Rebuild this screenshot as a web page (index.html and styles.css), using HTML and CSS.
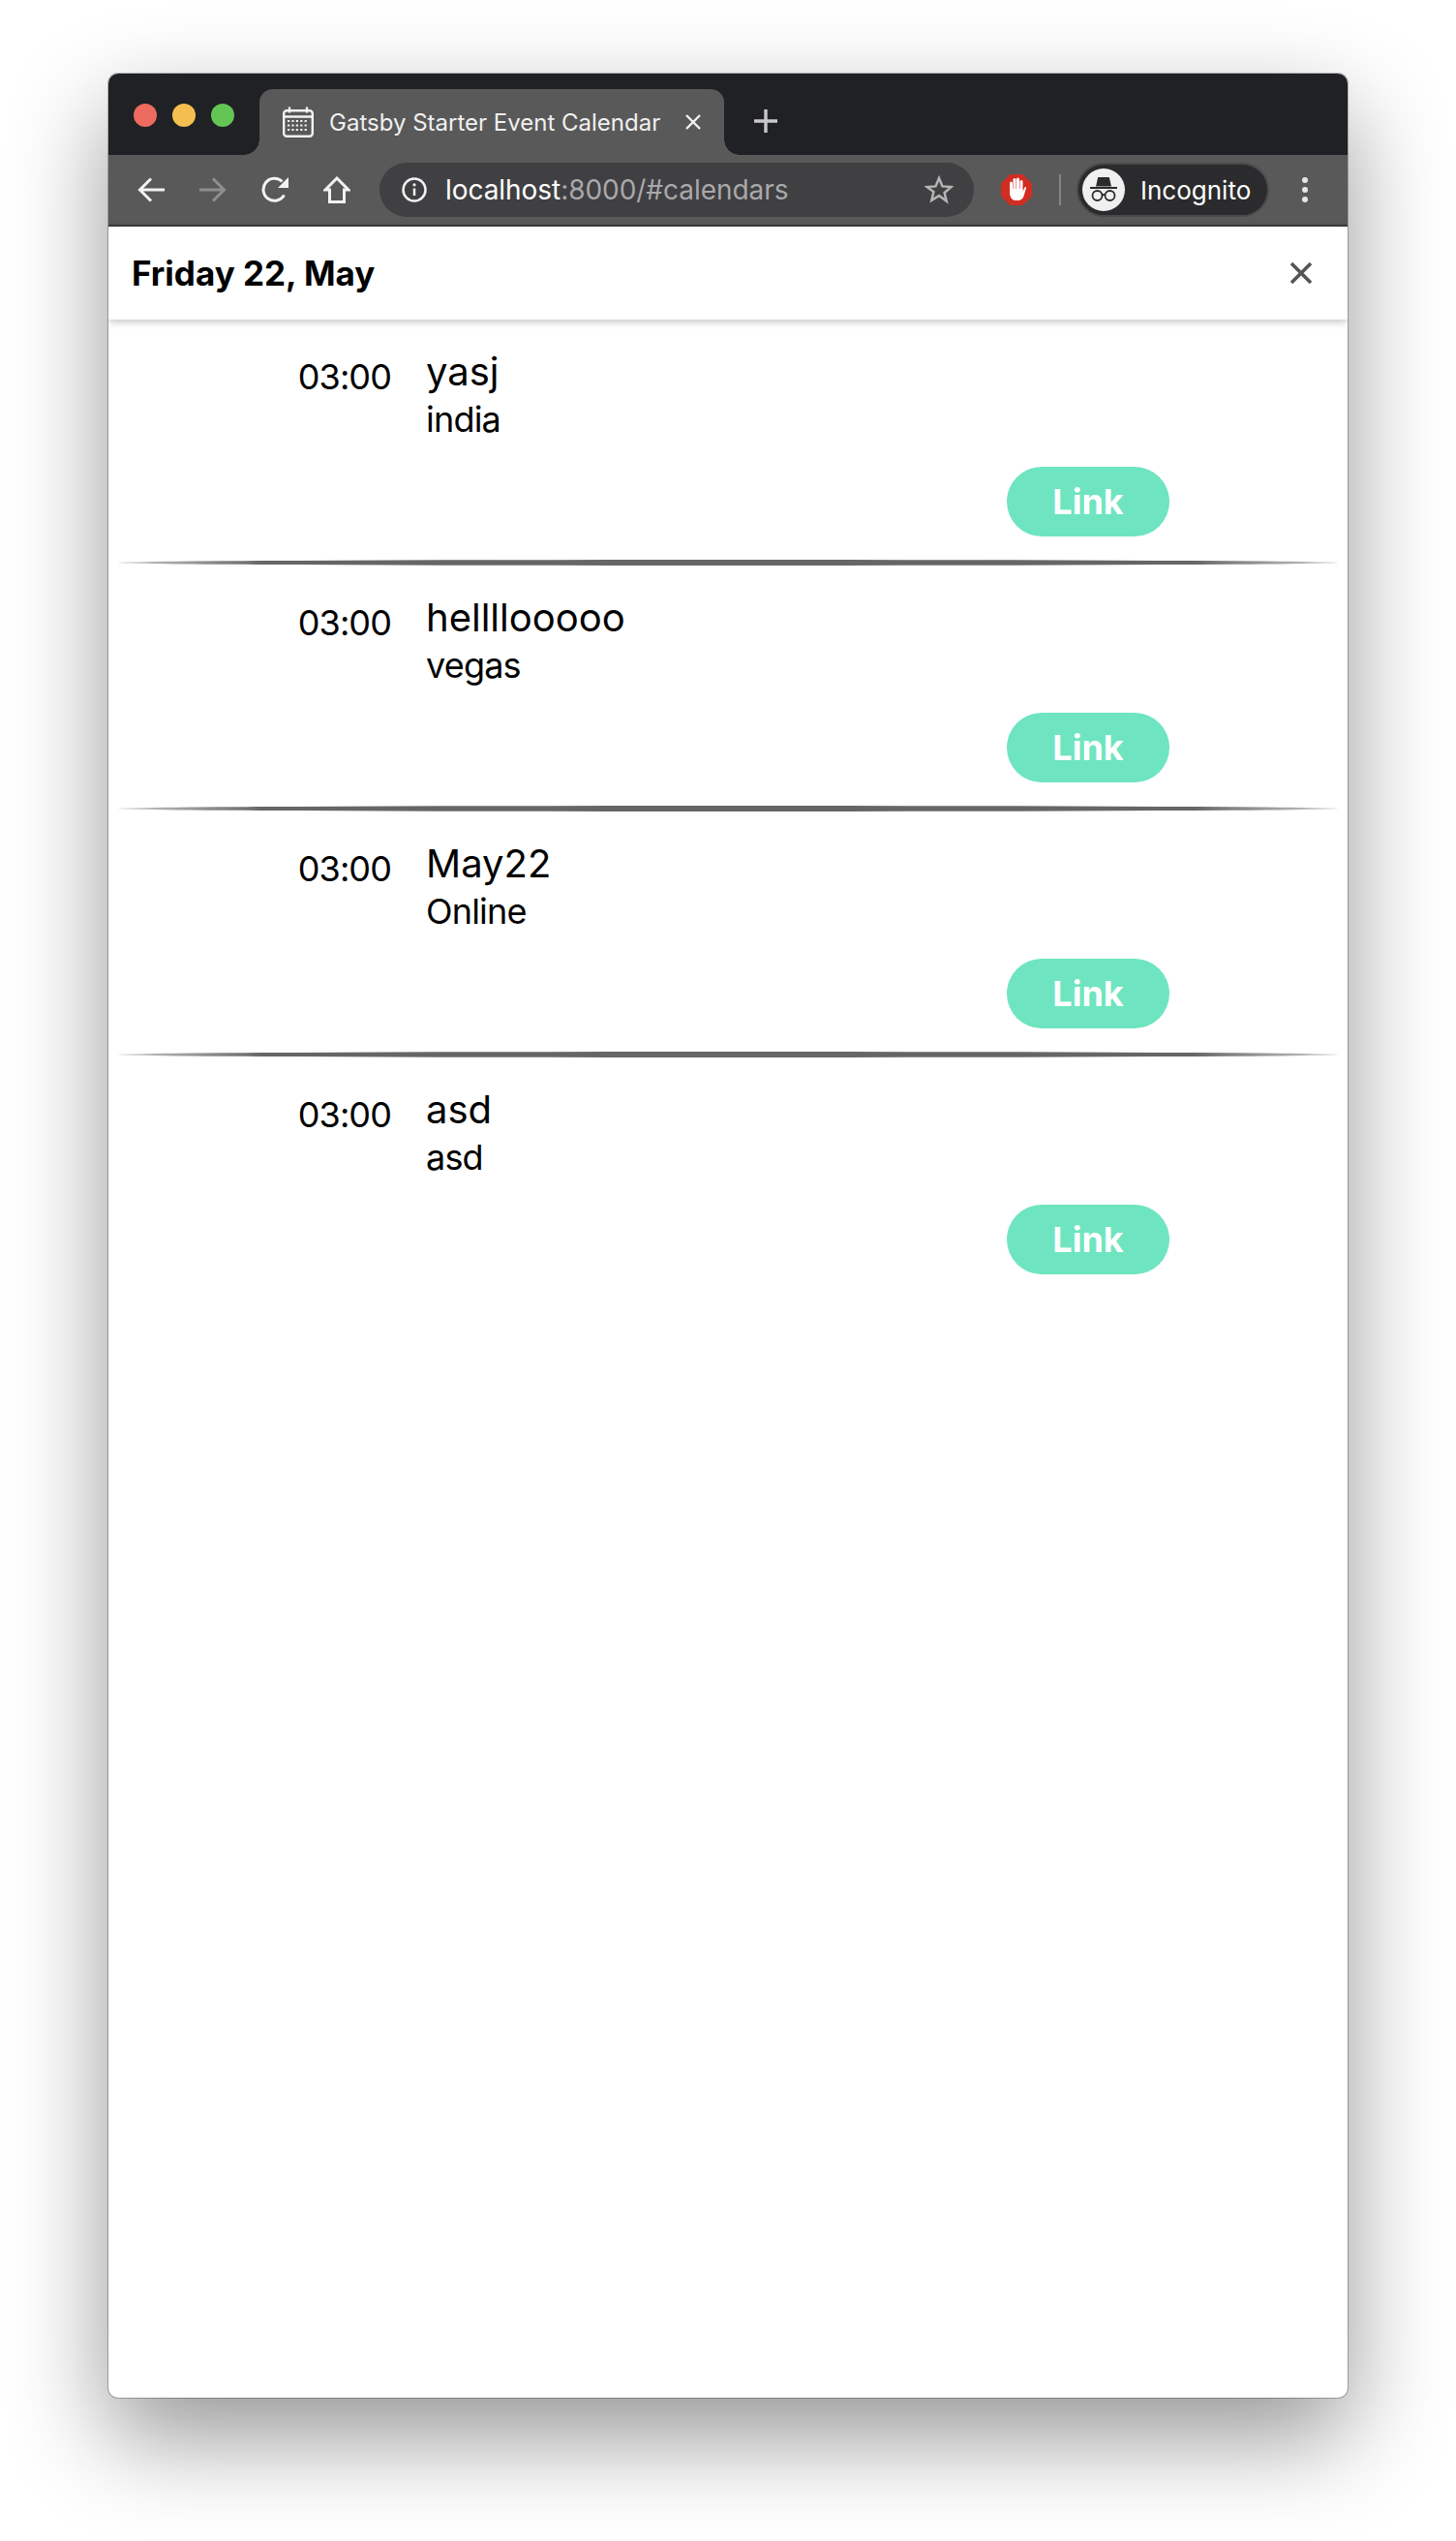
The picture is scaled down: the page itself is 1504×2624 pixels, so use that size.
FILE: index.html
```html
<!DOCTYPE html>
<html lang="en">
<head>
    <meta charset="UTF-8">
    <title>Gatsby Starter Event Calendar</title>
    <link rel="stylesheet" href="styles.css">
</head>
<body>

<div class="window">
    <div class="tabstrip">
        <div class="lights">
            <span class="light red"></span>
            <span class="light yellow"></span>
            <span class="light green"></span>
        </div>
        <div class="tab">
            <svg class="favicon" width="32" height="32" viewBox="0 0 32 32">
                <rect x="1.200" y="4.200" width="29.600" height="26.600" rx="3" fill="none" stroke="#f2f2f2" stroke-width="2.400"/>
                <path d="M1 10.500h30" stroke="#f2f2f2" stroke-width="2.400"/>
                <path d="M7 0.500v6M25 0.500v6" stroke="#f2f2f2" stroke-width="2.400"/>
                <path d="M5 15h22M5 19.500h22M5 24h22" stroke="#f2f2f2" stroke-width="2.200" stroke-dasharray="2.200 2.200"/>
            </svg>
            <span class="tab-title">Gatsby Starter Event Calendar</span>
            <svg class="tab-close" width="18" height="18" viewBox="0 0 18 18">
                <path d="M2 2l14 14M16 2L2 16" stroke="#f2f2f2" stroke-width="2.400"/>
            </svg>
        </div>
        <svg class="new-tab" width="24" height="24" viewBox="0 0 24 24">
            <path d="M12 0v24M0 12h24" stroke="#c8c8c8" stroke-width="3.400"/>
        </svg>
    </div>

    <div class="toolbar">
        <svg class="nav-icon" width="28" height="26" viewBox="0 0 28 26">
            <path d="M28 13H3M14 1.500L2.500 13 14 24.500" fill="none" stroke="#f2f2f2" stroke-width="3"/>
        </svg>
        <svg class="nav-icon" width="28" height="26" viewBox="0 0 28 26">
            <path d="M0 13h25M14 1.500L25.500 13 14 24.500" fill="none" stroke="#8f8f8f" stroke-width="3"/>
        </svg>
        <svg class="nav-icon" width="28" height="28" viewBox="0 0 28 28">
            <path d="M23.500 19.500A11.500 11.500 0 1 1 21.500 5.500" fill="none" stroke="#f2f2f2" stroke-width="3"/>
            <path d="M28 1v11H17z" fill="#f2f2f2"/>
        </svg>
        <svg class="nav-icon" width="28" height="28" viewBox="0 0 28 28">
            <path d="M14 2L2 14h4.500v12.500h15V14H26z" fill="none" stroke="#f2f2f2" stroke-width="3"/>
        </svg>
        <div class="omnibox">
            <svg width="26" height="26" viewBox="0 0 26 26">
                <circle cx="13" cy="13" r="11.500" fill="none" stroke="#f2f2f2" stroke-width="2.500"/>
                <path d="M13 11.500v7.500" stroke="#f2f2f2" stroke-width="2.500"/>
                <circle cx="13" cy="7.800" r="1.600" fill="#f2f2f2"/>
            </svg>
            <span class="url"><span class="url-host">localhost</span>:8000/#calendars</span>
            <svg class="star" width="30" height="30" viewBox="0 0 30 30">
                <path d="M15 3l3.500 8.400 9 .7-6.900 5.900 2.100 8.800L15 21.100 7.300 25.800l2.100-8.800L2.500 12.100l9-.7z" fill="none" stroke="#b5b5b5" stroke-width="2.500"/>
            </svg>
        </div>
        <svg class="adblock" width="32" height="32" viewBox="0 0 32 32">
            <path d="M9.500 0h13L32 9.500v13L22.500 32h-13L0 22.500v-13z" fill="#d22d22"/>
            <path d="M10.500 17V9M14 16V5.500M17.500 16V5M21 17V7.500" stroke="#fff" stroke-width="3" stroke-linecap="round"/>
            <path d="M9 15h13.500v3l2-4.500c.4-.9 1.700-.5 1.500.6L24 21c-.8 3.600-2.800 6-6.500 6h-2c-3 0-4.600-1.500-5.800-4L9 20z" fill="#fff"/>
        </svg>
        <span class="toolbar-divider"></span>
        <div class="profile">
            <svg width="44" height="44" viewBox="0 0 44 44">
                <circle cx="22" cy="22" r="22" fill="#f0f0f0"/>
                <path d="M14 18.500l2.200-9.500h11.600l2.200 9.500z" fill="#2b2b2d"/>
                <path d="M8 20h28" stroke="#2b2b2d" stroke-width="2"/>
                <circle cx="15.500" cy="28" r="5" fill="none" stroke="#2b2b2d" stroke-width="1.800"/>
                <circle cx="28.500" cy="28" r="5" fill="none" stroke="#2b2b2d" stroke-width="1.800"/>
                <path d="M20.500 27.500c1-.8 2-.8 3 0" fill="none" stroke="#2b2b2d" stroke-width="1.800"/>
            </svg>
            <span class="profile-name">Incognito</span>
        </div>
        <div class="menu-dots">
            <span></span>
            <span></span>
            <span></span>
        </div>
    </div>

    <div class="page">
        <header class="day-header">
            <h1>Friday 22, May</h1>
            <svg width="24" height="24" viewBox="0 0 24 24">
                <path d="M2 2l20 20M22 2L2 22" stroke="#555" stroke-width="3.600"/>
            </svg>
        </header>

        <section class="event">
            <div class="event-main">
                <div class="event-time">03:00</div>
                <div>
                    <div class="event-title">yasj</div>
                    <div class="event-place">india</div>
                </div>
            </div>
            <div class="event-actions"><a class="link-btn">Link</a></div>
        </section>
        <hr class="event-sep">

        <section class="event">
            <div class="event-main">
                <div class="event-time">03:00</div>
                <div>
                    <div class="event-title">hellllooooo</div>
                    <div class="event-place">vegas</div>
                </div>
            </div>
            <div class="event-actions"><a class="link-btn">Link</a></div>
        </section>
        <hr class="event-sep">

        <section class="event">
            <div class="event-main">
                <div class="event-time">03:00</div>
                <div>
                    <div class="event-title">May22</div>
                    <div class="event-place">Online</div>
                </div>
            </div>
            <div class="event-actions"><a class="link-btn">Link</a></div>
        </section>
        <hr class="event-sep">

        <section class="event">
            <div class="event-main">
                <div class="event-time">03:00</div>
                <div>
                    <div class="event-title">asd</div>
                    <div class="event-place">asd</div>
                </div>
            </div>
            <div class="event-actions"><a class="link-btn">Link</a></div>
        </section>
    </div>
</div>

</body>
</html>
```

FILE: styles.css
```css
body {
    margin: 0;
    padding: 76px 0 148px 112px;
    background-color: #fff;
    font-family: Inter, "Liberation Sans", sans-serif;
    color: #000;
}

/* browser window */
.window {
    width: 1280px;
    height: 2400px;
    box-sizing: border-box;
    border-radius: 10px;
    overflow: hidden;
    background-color: #fff;
    box-shadow: 0 0 0 1px rgba(0, 0, 0, 0.25), 0 40px 100px rgba(0, 0, 0, 0.42);
}

.tabstrip {
    height: 84px;
    background-color: #202124;
    display: flex;
    align-items: flex-end;
}

.lights {
    width: 156px;
    height: 68px;
    box-sizing: border-box;
    padding: 15px 0 0 26px;
    display: flex;
    gap: 16px;
    align-items: flex-start;
}

.light {
    width: 24px;
    height: 24px;
    border-radius: 50%;
}

.red { background-color: #ed6a5e; }
.yellow { background-color: #f5bf4f; }
.green { background-color: #62c554; }

.tab {
    position: relative;
    width: 480px;
    height: 68px;
    box-sizing: border-box;
    padding: 0 23px 0 24px;
    background-color: #595959;
    border-radius: 14px 14px 0 0;
    display: flex;
    align-items: center;
}

.tab::before,
.tab::after {
    content: "";
    position: absolute;
    bottom: 0;
    width: 16px;
    height: 16px;
}

.tab::before {
    left: -16px;
    background: radial-gradient(circle at 0 0, transparent 15.500px, #595959 16px);
}

.tab::after {
    right: -16px;
    background: radial-gradient(circle at 100% 0, transparent 15.500px, #595959 16px);
}

.tab-title {
    margin-left: 16px;
    font-size: 24px;
    color: #f0f0f0;
    white-space: nowrap;
    flex: 1;
}

.new-tab {
    margin: 0 0 23px 31px;
}

.toolbar {
    height: 74px;
    box-sizing: border-box;
    border-bottom: 2px solid #3a3a3a;
    background-color: #595959;
    display: flex;
    align-items: center;
    padding-left: 30px;
}

.nav-icon {
    margin-right: 36px;
    flex: none;
}

.omnibox {
    width: 614px;
    height: 56px;
    margin-left: -6px;
    box-sizing: border-box;
    padding: 0 21px 0 23px;
    border-radius: 28px;
    background-color: #403f42;
    display: flex;
    align-items: center;
}

.url {
    margin-left: 19px;
    flex: 1;
    font-size: 28px;
    letter-spacing: -0.05px;
    color: #a9a9aa;
    white-space: nowrap;
}

.url-host {
    color: #fff;
}

.adblock {
    margin-left: 28px;
    flex: none;
}

.toolbar-divider {
    width: 2px;
    height: 32px;
    margin-left: 28px;
    background-color: #858585;
}

.profile {
    width: 199px;
    height: 56px;
    margin-left: 16px;
    box-sizing: border-box;
    padding-left: 4px;
    border: 2px solid #4a4a4c;
    border-radius: 28px;
    background-color: #2b2b2d;
    display: flex;
    align-items: center;
}

.profile-name {
    margin-left: 16px;
    font-size: 26px;
    color: #fff;
}

.menu-dots {
    margin-left: 34px;
    display: flex;
    flex-direction: column;
    gap: 4px;
}

.menu-dots span {
    width: 6px;
    height: 6px;
    border-radius: 50%;
    background-color: #e6e6e6;
}

/* calendar page */
.day-header {
    height: 96px;
    box-sizing: border-box;
    padding: 0 36px 0 24px;
    display: flex;
    align-items: center;
    justify-content: space-between;
    box-shadow: 0 2px 8px rgba(0, 0, 0, 0.25);
    position: relative;
}

.day-header h1 {
    margin: 0;
    font-size: 35px;
    font-weight: 700;
}

.event {
    padding-top: 30px;
}

.event-main {
    display: flex;
    gap: 36px;
}

.event-time {
    width: 292px;
    margin-top: 7px;
    text-align: right;
    font-size: 36px;
    line-height: 44px;
    letter-spacing: -0.9px;
}

.event-title {
    font-size: 40px;
    line-height: 48px;
}

.event-place {
    font-size: 36px;
    line-height: 50px;
    letter-spacing: -0.8px;
}

.event-actions {
    margin-top: 24px;
    padding-right: 184px;
    display: flex;
    justify-content: flex-end;
}

.link-btn {
    width: 168px;
    height: 72px;
    border-radius: 36px;
    background-color: #6ee5c0;
    color: #fff;
    font-size: 36px;
    font-weight: 700;
    line-height: 72px;
    text-align: center;
}

.event-sep {
    height: 6px;
    margin: 24px 10px 0;
    border: 0;
    border-radius: 50%;
    background: linear-gradient(to right, #ccc, #666 12%, #666 88%, #ccc);
}
```
